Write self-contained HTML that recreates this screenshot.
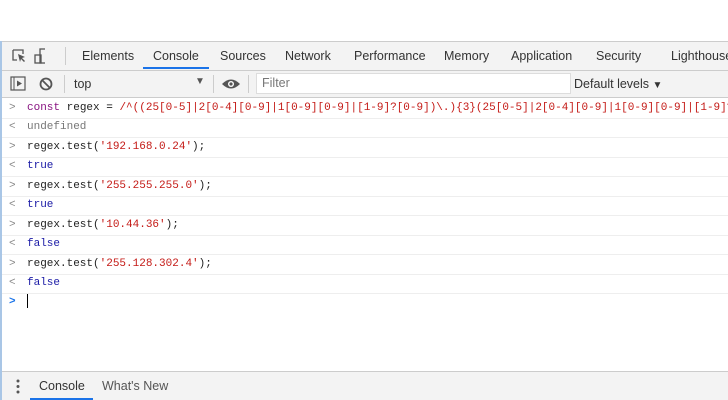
<!DOCTYPE html><html><head><style>
body{margin:0;width:728px;height:400px;overflow:hidden;background:#fff;font-family:"Liberation Sans",sans-serif;position:relative}
.dt{position:absolute;left:0;top:41px;width:728px;height:359px;border-left:2px solid #a9c6e6;box-sizing:border-box;overflow:hidden}
.tabs{height:28px;background:#f3f3f3;border-bottom:1px solid #ccc;border-top:1px solid #ccc;position:relative;font-size:12.5px;color:#333}
.tabs span{position:absolute;top:7px}
.tb{height:26px;background:#f3f3f3;border-bottom:1px solid #ccc;position:relative;font-size:12.5px;color:#333}
.ln{position:absolute;left:0;width:726px;overflow:hidden;height:19px;border-bottom:1px solid #eee;font-family:"Liberation Mono",monospace;font-size:11px;line-height:19px;white-space:pre}
.ln b{font-weight:normal;position:absolute;left:7px;color:#888;font-size:11px}
.ln i{font-style:normal;position:absolute;left:25px}
.k{color:#881280}.r{color:#c41a16}.s{color:#c41a16}.v{color:#1a1aa6}.n{color:#222}
.bot{position:absolute;left:0;top:330px;width:726px;height:29px;background:#f3f3f3;border-top:1px solid #ccc;font-size:12.5px;color:#333}
</style></head><body>
<div class="dt">
<div class="tabs">
<svg style="position:absolute;left:9px;top:6px" width="34" height="16"><path d="M2 2h10v4M2 2v10h4" fill="none" stroke="#555" stroke-width="1.3"/><path d="M7 6l7 3-3 1 3 3-1 1-3-3-1 3z" fill="#555"/><rect x="29" y="1" width="6" height="14" fill="none" stroke="#555" stroke-width="1.3"/><rect x="24" y="7" width="6" height="8" fill="none" stroke="#555" stroke-width="1.3"/></svg>
<div style="position:absolute;left:63px;top:5px;width:1px;height:18px;background:#ccc"></div>
<span style="left:80px">Elements</span>
<span style="left:151px">Console</span>
<div style="position:absolute;left:141px;top:25px;width:66px;height:2px;background:#1a73e8"></div>
<span style="left:218px">Sources</span>
<span style="left:283px">Network</span>
<span style="left:352px">Performance</span>
<span style="left:442px">Memory</span>
<span style="left:509px">Application</span>
<span style="left:594px">Security</span>
<span style="left:669px">Lighthouse</span>
</div>
<div class="tb">
<svg style="position:absolute;left:8px;top:5px" width="50" height="16"><rect x="1" y="1" width="14" height="13" fill="none" stroke="#555" stroke-width="1.2"/><path d="M4 1v13" stroke="#555"/><path d="M7 4.5l5 3-5 3z" fill="#555"/><circle cx="36" cy="8" r="5.5" fill="none" stroke="#555" stroke-width="1.8"/><path d="M32 4l8 8" stroke="#555" stroke-width="1.8"/></svg>
<div style="position:absolute;left:62px;top:4px;width:1px;height:18px;background:#ccc"></div>
<span style="position:absolute;left:72px;top:6px">top</span>
<span style="position:absolute;left:193px;top:5px;font-size:10px;color:#555">▼</span>
<div style="position:absolute;left:211px;top:4px;width:1px;height:18px;background:#ccc"></div>
<svg style="position:absolute;left:219px;top:6px" width="20" height="14"><path d="M1 7Q10-2 19 7Q10 16 1 7z" fill="#555"/><circle cx="10" cy="7" r="3" fill="#fff"/><circle cx="10" cy="7" r="1.6" fill="#555"/></svg>
<div style="position:absolute;left:246px;top:4px;width:1px;height:18px;background:#ccc"></div>
<div style="position:absolute;left:254px;top:2px;width:308px;height:19px;background:#fff;border:1px solid #ddd;color:#777;font-size:12.5px;line-height:19px;padding-left:5px;box-sizing:content-box">Filter</div>
<span style="position:absolute;left:572px;top:6px">Default levels <span style="font-size:10px">▼</span></span>
</div>
<div class="ln" style="top:58px"><b>&gt;</b><i><span class="k">const</span> <span class="n">regex</span> = <span class="r">/^((25[0-5]|2[0-4][0-9]|1[0-9][0-9]|[1-9]?[0-9])\.){3}(25[0-5]|2[0-4][0-9]|1[0-9][0-9]|[1-9]?[0-9])$/</span></i></div>
<div class="ln" style="top:77px"><b>&lt;</b><i style="color:#777">undefined</i></div>
<div class="ln" style="top:97px"><b>&gt;</b><i class="n">regex.test(<span class="s">'192.168.0.24'</span>);</i></div>
<div class="ln" style="top:116px"><b>&lt;</b><i class="v">true</i></div>
<div class="ln" style="top:136px"><b>&gt;</b><i class="n">regex.test(<span class="s">'255.255.255.0'</span>);</i></div>
<div class="ln" style="top:155px"><b>&lt;</b><i class="v">true</i></div>
<div class="ln" style="top:175px"><b>&gt;</b><i class="n">regex.test(<span class="s">'10.44.36'</span>);</i></div>
<div class="ln" style="top:194px"><b>&lt;</b><i class="v">false</i></div>
<div class="ln" style="top:214px"><b>&gt;</b><i class="n">regex.test(<span class="s">'255.128.302.4'</span>);</i></div>
<div class="ln" style="top:233px"><b>&lt;</b><i class="v">false</i></div>
<div class="ln" style="top:252px;border:none"><b style="color:#1a73e8;font-weight:bold">&gt;</b><i><span style="display:inline-block;width:1px;height:14px;background:#000;vertical-align:middle"></span></i></div>
<div class="bot">
<svg style="position:absolute;left:14px;top:7px" width="4" height="16"><circle cx="2" cy="2" r="1.5" fill="#555"/><circle cx="2" cy="7.5" r="1.5" fill="#555"/><circle cx="2" cy="13" r="1.5" fill="#555"/></svg>
<span style="position:absolute;left:37px;top:7px">Console</span>
<div style="position:absolute;left:28px;top:26px;width:63px;height:3px;background:#1a73e8"></div>
<span style="position:absolute;left:100px;top:7px;color:#555">What's New</span>
</div>
</div>
</body></html>
